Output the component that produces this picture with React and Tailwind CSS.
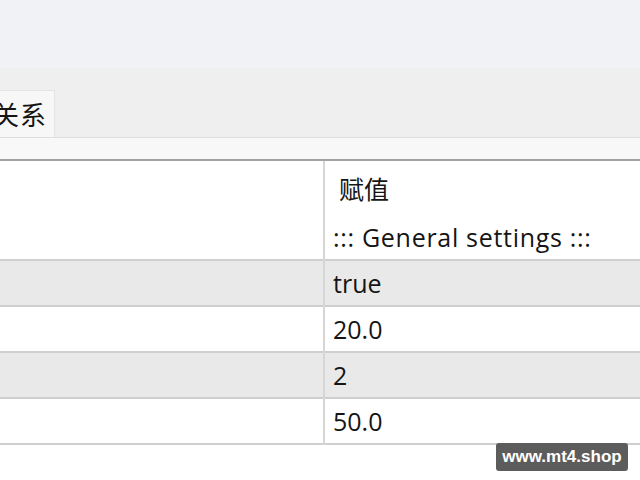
export default function App() {
  const rows = [
    { v: "true", bg: "bg-[#e9e9e9]" },
    { v: "20.0", bg: "bg-white" },
    { v: "2", bg: "bg-[#e9e9e9]" },
    { v: "50.0", bg: "bg-white" },
  ];
  const font = { fontFamily: '"Open Sans", "Noto Sans CJK SC", sans-serif' };
  const cjk = { fontFamily: '"Noto Sans CJK SC", sans-serif' };
  return (
    <div className="w-[640px] h-[480px] overflow-hidden bg-white relative text-[#151515]" style={font}>
      <div className="h-[68px] bg-[#f1f2f6]" />
      <div className="h-[69px] bg-[#efefef] flex items-end">
        <div className="w-[55px] h-[47px] bg-[#f7f7f7] border-t border-r border-[#e4e4e4] flex items-center overflow-hidden">
          <span className="ml-[-7px] text-[26px] leading-none whitespace-nowrap tracking-[1px]" style={cjk}>关系</span>
        </div>
      </div>
      <div className="h-[24px] bg-[#f8f8f8] border-t border-[#dedede] border-b-2 border-b-[#a3a3a3]" />
      <div className="flex">
        <div className="w-[325px] border-r-2 border-[#d6d6d6] flex flex-col">
          <div className="h-[100px] bg-white border-b-2 border-[#cfcfcf]" />
          {rows.map((r, i) => (
            <div key={i} className={`h-[46px] ${r.bg} border-b-2 border-[#cfcfcf]`} />
          ))}
        </div>
        <div className="flex-1 flex flex-col">
          <div className="h-[100px] bg-white border-b-2 border-[#cfcfcf] flex flex-col pl-[8px]">
            <div className="h-[54px] flex items-center">
              <span className="text-[25px] leading-none ml-[6px]" style={cjk}>赋值</span>
            </div>
            <div className="h-[44px] flex items-center text-[25px] leading-none tracking-[0.7px]">::: General settings :::</div>
          </div>
          {rows.map((r, i) => (
            <div key={i} className={`h-[46px] ${r.bg} border-b-2 border-[#cfcfcf] flex items-center pl-[8px] text-[25px] leading-none`}>
              {r.v}
            </div>
          ))}
        </div>
      </div>
      <div className="absolute left-[496px] top-[443px] w-[132px] h-[28px] rounded-[3px] bg-[#5c5c5c] text-white flex items-center justify-center text-[17px] font-bold" style={{ fontFamily: '"Liberation Sans", Arial, sans-serif' }}>
        www.mt4.shop
      </div>
    </div>
  );
}
